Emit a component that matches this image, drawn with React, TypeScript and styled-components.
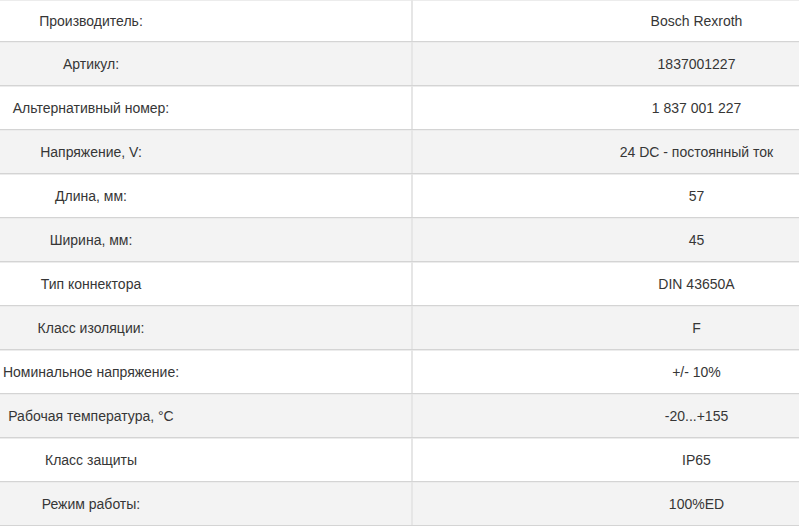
import React from "react";
import styled, { createGlobalStyle } from "styled-components";

const Global = createGlobalStyle`
  html, body { margin: 0; padding: 0; background: #ffffff; }
  body { font-family: "Liberation Sans", Arial, sans-serif; }
`;

const Table = styled.div`
  width: 799px;
  display: flex;
  flex-direction: column;
  color: #363636;
  font-size: 14px;
  overflow: hidden;
  height: 528px;
`;

const Row = styled.div<{ $shade: boolean; $h: number }>`
  display: grid;
  grid-template-columns: 411px 2px 1fr;
  height: ${(p) => p.$h}px;
  flex: 0 0 auto;
  box-sizing: border-box;
  background: ${(p) => (p.$shade ? "#f3f3f3" : "#ffffff")};
  border-bottom: 1px solid #d4d4d4;
  box-shadow: inset 0 1px 0 #ececec;
`;

const Divider = styled.div`
  background: #e6e6e6;
`;

const LabelCell = styled.div`
  display: flex;
  align-items: center;
  justify-content: center;
  padding-right: 229px;
  white-space: nowrap;
`;

const ValueCell = styled.div`
  display: flex;
  align-items: center;
  justify-content: center;
  padding-left: 181px;
  white-space: nowrap;
`;

const rows: [string, string][] = [
  ["Производитель:", "Bosch Rexroth"],
  ["Артикул:", "1837001227"],
  ["Альтернативный номер:", "1 837 001 227"],
  ["Напряжение, V:", "24 DC - постоянный ток"],
  ["Длина, мм:", "57"],
  ["Ширина, мм:", "45"],
  ["Тип коннектора", "DIN 43650A"],
  ["Класс изоляции:", "F"],
  ["Номинальное напряжение:", "+/- 10%"],
  ["Рабочая температура, °C", "-20...+155"],
  ["Класс защиты", "IP65"],
  ["Режим работы:", "100%ED"],
];

export default function App() {
  return (
    <>
      <Global />
      <Table>
        {rows.map(([k, v], i) => (
          <Row key={k} $shade={i % 2 === 1} $h={i === 0 ? 42 : 44}>
            <LabelCell>{k}</LabelCell>
            <Divider />
            <ValueCell>{v}</ValueCell>
          </Row>
        ))}
      </Table>
    </>
  );
}
